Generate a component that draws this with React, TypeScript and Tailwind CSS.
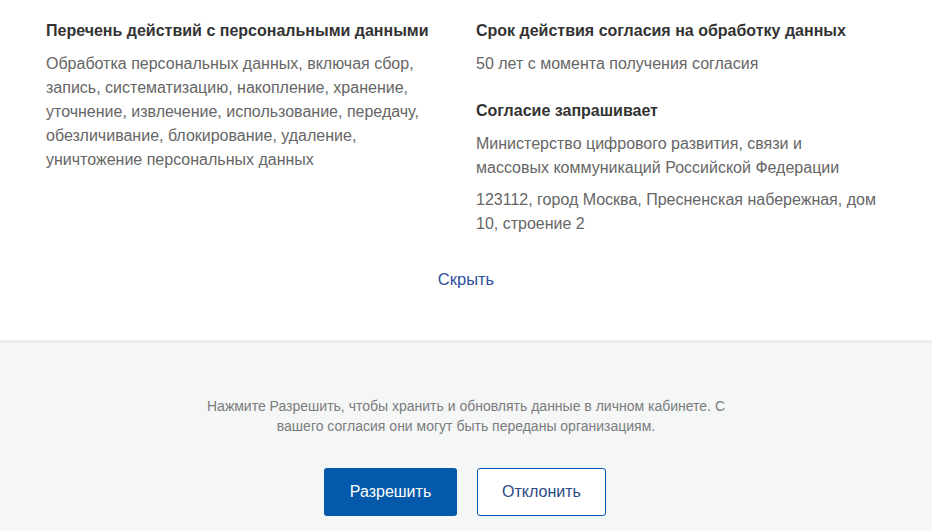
import React from "react";

const font = { fontFamily: '"Liberation Sans", Arial, sans-serif' };

function Section({ title, children }: { title: string; children: React.ReactNode }) {
  return (
    <div>
      <h3 className="text-[16px] leading-5 font-bold text-[#333]">{title}</h3>
      <div className="mt-[11px] text-[16px] leading-6 text-[#666]">{children}</div>
    </div>
  );
}

export default function App() {
  return (
    <div className="min-h-[531px] bg-[#f5f6f6]" style={font}>
      <div className="bg-white pt-[21px] pb-[48px]">
        <div className="flex pl-[46px]">
          <div className="w-[400px] shrink-0">
            <Section title="Перечень действий с персональными данными">
              Обработка персональных данных, включая сбор, запись, систематизацию, накопление,
              хранение, уточнение, извлечение, использование, передачу, обезличивание,
              блокирование, удаление, уничтожение персональных данных
            </Section>
          </div>
          <div className="ml-[30px] w-[410px] shrink-0">
            <Section title="Срок действия согласия на обработку данных">
              50 лет с момента получения согласия
            </Section>
            <div className="mt-[25px]">
              <Section title="Согласие запрашивает">
                <p>
                  Министерство цифрового развития, связи и
                  <br />
                  массовых коммуникаций Российской Федерации
                </p>
                <p className="mt-2">123112, город Москва, Пресненская набережная, дом 10, строение 2</p>
              </Section>
            </div>
          </div>
        </div>
        <div className="mt-[31px] text-center">
          <a href="#" className="text-[16.5px] leading-6 text-[#2e4d9c]">
            Скрыть
          </a>
        </div>
      </div>
      <div className="border-t-[3px] border-[#ececec] pt-[53px] pb-[15px]">
        <p className="mx-auto max-w-[545px] text-center text-[14px] leading-5 text-[#7a7c7e]">
          Нажмите Разрешить, чтобы хранить и обновлять данные в личном кабинете. С вашего
          согласия они могут быть переданы организациям.
        </p>
        <div className="mt-[32px] flex justify-center gap-5 pr-[2px]">
          <button className="h-12 w-[133px] rounded-[3px] bg-[#0459ab] text-[16px] text-white">
            Разрешить
          </button>
          <button className="h-12 w-[129px] rounded-[3px] border border-[#0459ab] bg-white text-[16px] text-[#2b4a86]">
            Отклонить
          </button>
        </div>
      </div>
    </div>
  );
}
